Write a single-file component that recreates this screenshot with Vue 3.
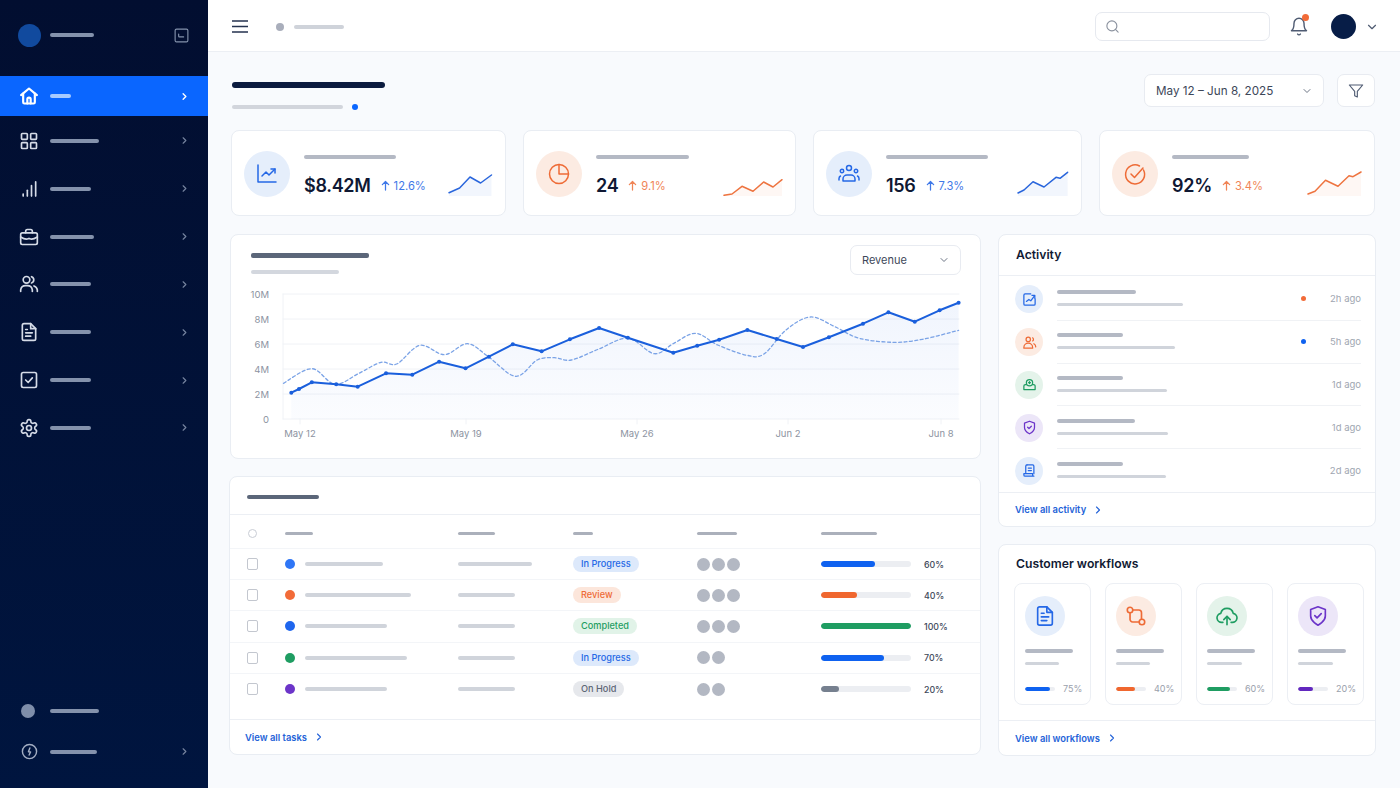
<template>
  <div class="app">
    <aside class="sidebar">
      <div class="brand">
        <span class="logo"></span>
        <span class="bar side-bar" style="width: 44px"></span>
        <svg class="collapse" viewBox="0 0 24 24"><path v-for="d in icons.panel" :key="d" :d="d" /></svg>
      </div>
      <nav>
        <a v-for="(item, i) in nav" :key="item.icon" class="nav-item" :class="{ active: i === 0 }">
          <svg class="nav-icon" viewBox="0 0 24 24"><path v-for="d in icons[item.icon]" :key="d" :d="d" /></svg>
          <span class="bar side-bar" :style="{ width: item.w + 'px' }"></span>
          <svg class="nav-chev" viewBox="0 0 24 24"><path :d="icons.right[0]" /></svg>
        </a>
      </nav>
      <div class="side-bottom">
        <a class="nav-item low">
          <span class="side-dot"></span>
          <span class="bar side-bar" style="width: 49px"></span>
        </a>
        <a class="nav-item low">
          <svg class="nav-icon" viewBox="0 0 24 24"><path v-for="d in icons.bolt" :key="d" :d="d" /></svg>
          <span class="bar side-bar" style="width: 47px"></span>
          <svg class="nav-chev" viewBox="0 0 24 24"><path :d="icons.right[0]" /></svg>
        </a>
      </div>
    </aside>

    <div class="page">
      <header class="topbar">
        <svg class="burger" viewBox="0 0 16 13"><path d="M0 1h16M0 6.5h16M0 12h16" /></svg>
        <span class="crumb-dot"></span>
        <span class="bar crumb" style="width: 50px"></span>
        <div class="search">
          <svg viewBox="0 0 24 24"><path v-for="d in icons.search" :key="d" :d="d" /></svg>
        </div>
        <div class="bell">
          <svg viewBox="0 0 24 24"><path v-for="d in icons.bell" :key="d" :d="d" /></svg>
          <span class="bell-dot"></span>
        </div>
        <span class="avatar"></span>
        <svg class="chev small" viewBox="0 0 24 24"><path :d="icons.down[0]" /></svg>
      </header>

      <main class="content">
        <div class="page-head">
          <div>
            <span class="bar title-bar"></span>
            <div class="sub-row">
              <span class="bar sub-bar"></span>
              <span class="sub-dot"></span>
            </div>
          </div>
          <div class="head-actions">
            <div class="select date">
              <span>May 12 – Jun 8, 2025</span>
              <svg class="chev" viewBox="0 0 24 24"><path :d="icons.down[0]" /></svg>
            </div>
            <div class="select filter">
              <svg viewBox="0 0 24 24"><path :d="icons.filter[0]" /></svg>
            </div>
          </div>
        </div>

        <section class="stats">
          <div v-for="s in stats" :key="s.value" class="card stat">
            <span class="stat-icon" :class="s.tone">
              <svg viewBox="0 0 24 24"><path v-for="d in icons[s.icon]" :key="d" :d="d" /></svg>
            </span>
            <div class="stat-body">
              <span class="bar stat-bar" :style="{ width: s.bar + 'px' }"></span>
              <div class="stat-line">
                <strong>{{ s.value }}</strong>
                <span class="delta" :class="s.tone">
                  <svg viewBox="0 0 10 12"><path d="M5 11V1.5M1.5 5 5 1.5 8.5 5" /></svg>
                  {{ s.delta }}
                </span>
              </div>
            </div>
            <svg class="spark" :class="s.tone" :width="sparkBox(s).w" height="26" :viewBox="sparkBox(s).view">
              <path class="spark-fill" :d="sparkArea(s.points)" />
              <path class="spark-line" :d="linePath(s.points)" />
            </svg>
          </div>
        </section>

        <section class="lower">
          <div class="col">
            <div class="card chart-card">
              <div class="chart-head">
                <div>
                  <span class="bar chart-title"></span>
                  <span class="bar chart-sub"></span>
                </div>
                <div class="select metric">
                  <span>Revenue</span>
                  <svg class="chev" viewBox="0 0 24 24"><path :d="icons.down[0]" /></svg>
                </div>
              </div>
              <svg class="chart" viewBox="231 284 749 165" width="749" height="165">
                <defs>
                  <linearGradient id="areaFill" x1="0" y1="0" x2="0" y2="1">
                    <stop offset="0" stop-color="#2f6fe8" stop-opacity="0.07" />
                    <stop offset="1" stop-color="#2f6fe8" stop-opacity="0.02" />
                  </linearGradient>
                </defs>
                <g v-for="(t, i) in yTicks" :key="t">
                  <line x1="283" x2="959" :y1="294 + i * 25" :y2="294 + i * 25" class="grid-line" />
                  <text x="269" :y="297.5 + i * 25" text-anchor="end" class="axis">{{ t }}</text>
                </g>
                <line x1="283" x2="283" y1="294" y2="419" class="grid-line" />
                <line v-for="x in xGuides" :key="x" :x1="x" :x2="x" y1="419" y2="424" class="grid-line" />
                <text v-for="l in xLabels" :key="l.t" :x="l.x" y="437" text-anchor="middle" class="axis">{{ l.t }}</text>
                <path :d="chartArea" fill="url(#areaFill)" />
                <path :d="smoothPath(compare)" class="compare" />
                <path :d="linePath(revenue)" class="revenue" />
                <circle v-for="p in revenue" :key="p[0]" :cx="p[0]" :cy="p[1]" r="2" class="point" />
              </svg>
            </div>

            <div class="card table-card">
              <div class="table-title"><span class="bar"></span></div>
              <div class="trow thead">
                <span class="head-check"></span>
                <span class="bar th" style="width: 28px"></span>
                <span class="bar th" style="width: 37px"></span>
                <span class="bar th" style="width: 20px"></span>
                <span class="bar th" style="width: 40px"></span>
                <span class="bar th" style="width: 56px"></span>
              </div>
              <div v-for="r in rows" :key="r.name + r.pct" class="trow">
                <span class="check"></span>
                <div class="name-cell">
                  <span class="row-dot" :style="{ background: r.dot }"></span>
                  <span class="bar td" :style="{ width: r.name + 'px' }"></span>
                </div>
                <span class="bar td" :style="{ width: r.owner + 'px' }"></span>
                <div class="badge-cell"><span class="badge" :class="r.tone">{{ r.status }}</span></div>
                <div class="people">
                  <span v-for="n in r.people" :key="n"></span>
                </div>
                <div class="progress-cell">
                  <div class="track">
                    <div class="fill" :class="r.tone" :style="{ width: r.pct + '%' }"></div>
                  </div>
                  <span class="pct">{{ r.pct }}%</span>
                </div>
              </div>
              <div class="card-foot">
                <a class="link">View all tasks</a>
                <svg viewBox="0 0 24 24"><path :d="icons.right[0]" /></svg>
              </div>
            </div>
          </div>

          <div class="col">
            <div class="card activity">
              <h3 class="card-head">Activity</h3>
              <div class="act-list">
                <div v-for="a in activity" :key="a.icon" class="act-row">
                  <span class="act-icon" :class="a.tone">
                    <svg viewBox="0 0 24 24"><path v-for="d in icons[a.icon]" :key="d" :d="d" /></svg>
                  </span>
                  <div class="act-body">
                    <div class="act-text">
                      <span class="bar act-top" :style="{ width: a.top + 'px' }"></span>
                      <span class="bar act-low" :style="{ width: a.low + 'px' }"></span>
                    </div>
                    <span v-if="a.dot" class="act-dot" :class="a.dot"></span>
                    <span class="act-time">{{ a.time }}</span>
                  </div>
                </div>
              </div>
              <div class="card-foot">
                <a class="link">View all activity</a>
                <svg viewBox="0 0 24 24"><path :d="icons.right[0]" /></svg>
              </div>
            </div>

            <div class="card workflows">
              <h3 class="wf-head">Customer workflows</h3>
              <div class="wf-grid">
                <div v-for="w in workflows" :key="w.icon" class="wf-card">
                  <span class="wf-icon" :class="w.tone">
                    <svg viewBox="0 0 24 24"><path v-for="d in icons[w.icon]" :key="d" :d="d" /></svg>
                  </span>
                  <span class="bar wf-top"></span>
                  <span class="bar wf-low" :style="{ width: w.low + 'px' }"></span>
                  <div class="wf-progress">
                    <div class="track">
                      <div class="fill" :class="w.tone" :style="{ width: w.fill + 'px' }"></div>
                    </div>
                    <span>{{ w.pct }}%</span>
                  </div>
                </div>
              </div>
              <div class="card-foot">
                <a class="link">View all workflows</a>
                <svg viewBox="0 0 24 24"><path :d="icons.right[0]" /></svg>
              </div>
            </div>
          </div>
        </section>
      </main>
    </div>
  </div>
</template>

<script setup>
import { computed } from "vue";

const ring = (x, y, r) => `M${x - r} ${y}a${r} ${r} 0 1 0 ${2 * r} 0a${r} ${r} 0 1 0 ${-2 * r} 0`;

const icons = {
  right: ["M9 6l6 6-6 6"],
  down: ["M6 9l6 6 6-6"],
  panel: ["M5 3h14a2 2 0 0 1 2 2v14a2 2 0 0 1-2 2H5a2 2 0 0 1-2-2V5a2 2 0 0 1 2-2z", "M8 10v3a1 1 0 0 0 1 1h6"],
  home: ["M2.5 11 12 3l9.5 8", "M5 9v10.5A1.5 1.5 0 0 0 6.5 21h11a1.5 1.5 0 0 0 1.5-1.5V9", "M10 21v-5a2 2 0 0 1 4 0v5"],
  grid: ["M4 3h5a1 1 0 0 1 1 1v5a1 1 0 0 1-1 1H4a1 1 0 0 1-1-1V4a1 1 0 0 1 1-1z", "M15 3h5a1 1 0 0 1 1 1v5a1 1 0 0 1-1 1h-5a1 1 0 0 1-1-1V4a1 1 0 0 1 1-1z", "M4 14h5a1 1 0 0 1 1 1v5a1 1 0 0 1-1 1H4a1 1 0 0 1-1-1v-5a1 1 0 0 1 1-1z", "M15 14h5a1 1 0 0 1 1 1v5a1 1 0 0 1-1 1h-5a1 1 0 0 1-1-1v-5a1 1 0 0 1 1-1z"],
  signal: ["M5 20.5V18", "M10 20.5v-7", "M15 20.5V8", "M20 20.5v-17"],
  case: ["M4 7h16a2 2 0 0 1 2 2v10a2 2 0 0 1-2 2H4a2 2 0 0 1-2-2V9a2 2 0 0 1 2-2z", "M8 7V5a2 2 0 0 1 2-2h4a2 2 0 0 1 2 2v2", "M2 12c5 3 7 3 9 2h2c2 1 4 1 9-2"],
  users: [ring(9, 7, 4), "M2 21v-2a6 6 0 0 1 6-5h2a6 6 0 0 1 6 5v2", "M15 3.2a4 4 0 0 1 0 7.6", "M18 14.3a6 6 0 0 1 4 4.7v2"],
  note: ["M14 2H6a2 2 0 0 0-2 2v16a2 2 0 0 0 2 2h12a2 2 0 0 0 2-2V8z", "M14 2v6h6", "M8 9h2", "M8 13h8", "M8 17h6"],
  task: ["M5 3h14a2 2 0 0 1 2 2v14a2 2 0 0 1-2 2H5a2 2 0 0 1-2-2V5a2 2 0 0 1 2-2z", "M8 12l3 3 5-5.5"],
  gear: ["M12.22 2h-.44a2 2 0 0 0-2 2v.18a2 2 0 0 1-1 1.73l-.43.25a2 2 0 0 1-2 0l-.15-.08a2 2 0 0 0-2.73.73l-.22.38a2 2 0 0 0 .73 2.73l.15.1a2 2 0 0 1 1 1.72v.51a2 2 0 0 1-1 1.74l-.15.09a2 2 0 0 0-.73 2.73l.22.38a2 2 0 0 0 2.73.73l.15-.08a2 2 0 0 1 2 0l.43.25a2 2 0 0 1 1 1.73V20a2 2 0 0 0 2 2h.44a2 2 0 0 0 2-2v-.18a2 2 0 0 1 1-1.73l.43-.25a2 2 0 0 1 2 0l.15.08a2 2 0 0 0 2.73-.73l.22-.39a2 2 0 0 0-.73-2.73l-.15-.08a2 2 0 0 1-1-1.74v-.5a2 2 0 0 1 1-1.74l.15-.09a2 2 0 0 0 .73-2.73l-.22-.38a2 2 0 0 0-2.73-.73l-.15.08a2 2 0 0 1-2 0l-.43-.25a2 2 0 0 1-1-1.73V4a2 2 0 0 0-2-2z", ring(12, 12, 3)],
  bolt: [ring(12, 12, 10), "M12.5 7l-2 5.5h3l-2 4.5"],
  search: [ring(11, 11, 8), "M21 21l-4.3-4.3"],
  bell: ["M6 8a6 6 0 0 1 12 0c0 7 3 9 3 9H3s3-2 3-9", "M10.3 21a1.94 1.94 0 0 0 3.4 0"],
  filter: ["M22 3H2l8 9.46V19l4 2v-8.54L22 3z"],
  trend: ["M3 3v17h18", "M7 14l4-4 3 3 6-6", "M16 7h4v4"],
  pie: [ring(12, 12, 9.5), "M12 2.5V12h9.5"],
  team: [ring(12, 6, 2.5), ring(5, 9, 1.7), ring(19, 9, 1.7), "M6 19v-2a4 4 0 0 1 4-4h4a4 4 0 0 1 4 4v2z", "M2 18v-1.5a3 3 0 0 1 1.5-2.5", "M22 18v-1.5a3 3 0 0 0-1.5-2.5"],
  goal: ["M20.5 8a9.5 9.5 0 1 1-4-4", "M8 12l3.5 3.5L20 6"],
  actChart: ["M21 11v8a2 2 0 0 1-2 2H5a2 2 0 0 1-2-2V5a2 2 0 0 1 2-2h9", "M7 15l4-3 3 2 6-8", "M16 5.5h4.5V10"],
  actUsers: [ring(10, 7, 3.5), "M3 21v-1a7 7 0 0 1 14 0v1z", "M17 4.5a3 3 0 0 1 0 5", "M19 14a6 6 0 0 1 3 5"],
  actUser: [ring(12, 9, 5), "M7 12H5.5A2.5 2.5 0 0 0 3 14.5V20h18v-5.5a2.5 2.5 0 0 0-2.5-2.5H17", "M12 7.5v3M10.5 9h3"],
  actShield: ["M12 22s8-4 8-10V5l-8-3-8 3v7c0 6 8 10 8 10", "M9 11.5l2.2 2.2L15 10"],
  actScroll: ["M8 3h9a2 2 0 0 1 2 2v12", "M8 3a2 2 0 0 0-2 2v10", "M3 17h14v2a2 2 0 0 0 2 2H5a2 2 0 0 1-2-2z", "M10 8h5", "M10 12h5"],
  doc: ["M14 2H6a2 2 0 0 0-2 2v16a2 2 0 0 0 2 2h12a2 2 0 0 0 2-2V8z", "M14 2v6h6", "M8 9h3", "M8 13h8", "M8 17h6"],
  flow: [ring(5.5, 5.5, 3), ring(18.5, 18.5, 3), "M8.5 5.5H15a3 3 0 0 1 3 3v7", "M5.5 8.5V15a3 3 0 0 0 3 3.5h7"],
  cloud: ["M7.5 19h-1a5 5 0 0 1-1.3-9.9 7 7 0 0 1 13.6 0A5 5 0 0 1 17.5 19h-1", "M12 21.5v-9", "M8.5 16l3.5-3.5 3.5 3.5"],
  shield: ["M12 22s8-4 8-10V5l-8-3-8 3v7c0 6 8 10 8 10", "M8.5 11.5l2.5 2.5 4.500-4.500"]
};

const nav = [
  { icon: "home", w: 21 },
  { icon: "grid", w: 49 },
  { icon: "signal", w: 41 },
  { icon: "case", w: 44 },
  { icon: "users", w: 41 },
  { icon: "note", w: 41 },
  { icon: "task", w: 41 },
  { icon: "gear", w: 41 }
];

const stats = [
  { value: "$8.42M", delta: "12.6%", icon: "trend", tone: "blue", bar: 92,
    points: [[450, 192.7], [460.6, 188], [471, 177], [481.6, 183], [492.5, 175]] },
  { value: "24", delta: "9.1%", icon: "pie", tone: "orange", bar: 93,
    points: [[724, 195.3], [732, 194], [742, 186.3], [753, 191.3], [763.6, 182], [773, 187], [782, 179.7]] },
  { value: "156", delta: "7.3%", icon: "team", tone: "blue", bar: 102,
    points: [[1018, 193], [1024, 190], [1033, 181.7], [1044, 187], [1056, 177.3], [1060, 178.3], [1067.6, 172.3]] },
  { value: "92%", delta: "3.4%", icon: "goal", tone: "orange", bar: 77,
    points: [[1309, 194], [1316, 191.3], [1326.5, 180.3], [1339, 186.3], [1350, 175.7], [1354, 176.7], [1362, 172]] }
];

const revenue = [
  [291.3, 392.7], [299, 389], [311.8, 382.3], [336.2, 384.3], [357.7, 386.7],
  [386, 373.3], [412.3, 374.7], [439.1, 361.7], [465.5, 368.3], [488.9, 356.7],
  [512.8, 344.3], [541.6, 351.3], [569.9, 339.3], [599.1, 328], [627.9, 337.7],
  [673.3, 352.7], [697.2, 345.7], [719.1, 339.7], [747.4, 330], [776.7, 339],
  [803, 347], [828.9, 337.3], [863, 323.7], [888.4, 312.3], [914.8, 321.7],
  [939.6, 310.3], [958.6, 302.7]
];

const compare = [
  [283.5, 383.3], [311.8, 368.7], [334.8, 384.3], [359, 373.3], [381, 362.3],
  [396.7, 364], [420, 345.3], [444.5, 354.7], [467.4, 343.7], [488.4, 356.7],
  [515.7, 376.3], [537.2, 360], [554.3, 357.7], [571.3, 360], [598.2, 349.3],
  [628, 338.3], [654.3, 353.7], [673.8, 343.3], [695.7, 333.3], [717.7, 345],
  [747, 355.3], [764, 354], [786, 330], [810.4, 317], [834.8, 326.7],
  [859.2, 338.3], [893.3, 342.3], [922.5, 339.3], [958.6, 330.3]
];

const yTicks = ["10M", "8M", "6M", "4M", "2M", "0"];
const xGuides = [300, 466, 637, 788, 941];
const xLabels = [
  { t: "May 12", x: 300 },
  { t: "May 19", x: 466 },
  { t: "May 26", x: 637 },
  { t: "Jun 2", x: 788 },
  { t: "Jun 8", x: 941 }
];

const rows = [
  { name: 78, owner: 74, dot: "#2f76f6", status: "In Progress", tone: "blue", people: 3, pct: 60 },
  { name: 106, owner: 57, dot: "#f26b38", status: "Review", tone: "orange", people: 3, pct: 40 },
  { name: 82, owner: 57, dot: "#1f66ee", status: "Completed", tone: "green", people: 3, pct: 100 },
  { name: 102, owner: 57, dot: "#1f9d62", status: "In Progress", tone: "blue", people: 2, pct: 70 },
  { name: 82, owner: 57, dot: "#6c35c9", status: "On Hold", tone: "gray", people: 2, pct: 20 }
];

const activity = [
  { icon: "actChart", tone: "blue", top: 79, low: 126, dot: "orange", time: "2h ago" },
  { icon: "actUsers", tone: "orange", top: 66, low: 118, dot: "blue", time: "5h ago" },
  { icon: "actUser", tone: "green", top: 66, low: 110, time: "1d ago" },
  { icon: "actShield", tone: "purple", top: 78, low: 111, time: "1d ago" },
  { icon: "actScroll", tone: "blue", top: 66, low: 109, time: "2d ago" }
];

const workflows = [
  { icon: "doc", tone: "blue", low: 34, pct: 75, fill: 25 },
  { icon: "flow", tone: "orange", low: 34, pct: 40, fill: 19 },
  { icon: "cloud", tone: "green", low: 35, pct: 60, fill: 23 },
  { icon: "shield", tone: "purple", low: 35, pct: 20, fill: 15 }
];

const linePath = (pts) => pts.map((p, i) => (i ? "L" : "M") + p[0] + " " + p[1]).join("");

// catmull-rom through the points, for the dashed comparison line
const smoothPath = (pts) => {
  let d = `M${pts[0][0]} ${pts[0][1]}`;
  for (let i = 0; i < pts.length - 1; i++) {
    const a = pts[i - 1] || pts[i];
    const b = pts[i];
    const c = pts[i + 1];
    const e = pts[i + 2] || c;
    const c1 = [b[0] + (c[0] - a[0]) / 6, b[1] + (c[1] - a[1]) / 6];
    const c2 = [c[0] - (e[0] - b[0]) / 6, c[1] - (e[1] - b[1]) / 6];
    d += `C${c1[0].toFixed(1)} ${c1[1].toFixed(1)} ${c2[0].toFixed(1)} ${c2[1].toFixed(1)} ${c[0]} ${c[1]}`;
  }
  return d;
};

const sparkBox = (s) => {
  const x0 = s.points[0][0] - 1;
  const w = Math.ceil(s.points[s.points.length - 1][0] - x0 + 1);
  return { w, view: `${x0} 170 ${w} 26` };
};

const sparkArea = (pts) => `${linePath(pts)}V196H${pts[0][0]}Z`;

const chartArea = computed(() => `${linePath(revenue)}V419H${revenue[0][0]}Z`);
</script>

<style>
html,
body {
  margin: 0;
  background: #f8fafd;
}
</style>

<style scoped>
.app {
  display: flex;
  height: 788px;
  overflow: hidden;
  font-family: Inter, "Liberation Sans", sans-serif;
  color: #111a33;
}

svg {
  display: block;
  flex: none;
  fill: none;
  stroke: currentColor;
  stroke-width: 2;
  stroke-linecap: round;
  stroke-linejoin: round;
}

.bar {
  display: block;
  flex: none;
  height: 4px;
  border-radius: 2px;
  background: #b4b9c4;
}

/* sidebar */
.sidebar {
  width: 208px;
  flex: none;
  display: flex;
  flex-direction: column;
  background: linear-gradient(180deg, #020e30 0%, #00153f 100%);
}

.brand {
  height: 76px;
  display: flex;
  align-items: center;
  padding: 0 18px 6px 18px;
  box-sizing: border-box;
}

.logo {
  width: 23px;
  height: 23px;
  border-radius: 50%;
  background: #114a9e;
  margin-right: 9px;
}

.side-bar {
  background: #8492ac;
}

.collapse {
  width: 17px;
  height: 17px;
  margin-left: auto;
  color: #8492ac;
  stroke-width: 1.6;
}

.nav-item {
  height: 47.85px;
  display: flex;
  align-items: center;
  padding-left: 19px;
  padding-right: 18px;
  color: #d5dbe7;
}

.nav-item.active {
  height: 40px;
  margin-bottom: 1px;
  background: #0a66ff;
  color: #fff;
}

.nav-item.active .nav-icon {
  stroke-width: 2.6;
}

.nav-item.active .side-bar {
  background: #a8cbff;
}

.nav-item.active .nav-chev {
  color: #fff;
  stroke-width: 3;
}

.nav-icon {
  width: 20px;
  height: 20px;
  margin-right: 11px;
}

.nav-chev {
  width: 11px;
  height: 11px;
  margin-left: auto;
  color: #76849f;
  stroke-width: 2.5;
}

.side-bottom {
  margin-top: auto;
  padding-bottom: 16px;
}

.nav-item.low {
  height: 41px;
  padding-left: 21px;
}

.nav-item.low .nav-icon {
  width: 17px;
  height: 17px;
  color: #a3aec3;
  margin-right: 12px;
}

.side-dot {
  width: 14px;
  height: 14px;
  border-radius: 50%;
  background: #7f8eaa;
  margin-right: 15px;
}

/* topbar */
.page {
  flex: 1;
  min-width: 0;
  display: flex;
  flex-direction: column;
}

.topbar {
  height: 52px;
  flex: none;
  box-sizing: border-box;
  display: flex;
  align-items: center;
  padding: 2px 21px 0 24px;
  background: #fff;
  border-bottom: 1px solid #eceff4;
}

.burger {
  width: 16px;
  height: 13px;
  color: #25324f;
  margin-right: 28px;
  stroke-width: 1.6;
}

.crumb-dot {
  width: 8px;
  height: 8px;
  border-radius: 50%;
  background: #a9aebb;
  margin-right: 10px;
}

.crumb {
  background: #cfd3da;
}

.search {
  width: 175px;
  height: 29px;
  box-sizing: border-box;
  margin-left: auto;
  border: 1px solid #e6e9ef;
  border-radius: 7px;
  display: flex;
  align-items: center;
  padding-left: 9px;
  color: #8a919e;
}

.search svg {
  width: 15px;
  height: 15px;
  stroke-width: 1.8;
}

.bell {
  position: relative;
  margin-left: 19px;
  color: #4f5b72;
}

.bell svg {
  width: 20px;
  height: 21px;
  stroke-width: 1.7;
}

.bell-dot {
  position: absolute;
  top: -2px;
  right: 0;
  width: 7px;
  height: 7px;
  border-radius: 50%;
  background: #f26b38;
}

.avatar {
  width: 25px;
  height: 25px;
  border-radius: 50%;
  background: #071d47;
  margin-left: 22px;
}

.chev {
  width: 12px;
  height: 12px;
  color: #6d7585;
  stroke-width: 2;
}

.chev.small {
  width: 14px;
  height: 14px;
  margin-left: 9px;
  color: #4f5b72;
}

/* page */
.content {
  flex: 1;
  padding: 22px 24px 0 21px;
}

.page-head {
  display: flex;
  justify-content: space-between;
  margin: 0 1px 0 3px;
  height: 33px;
}

.title-bar {
  width: 153px;
  height: 6px;
  margin-top: 8px;
  border-radius: 3px;
  background: #0b1b3f;
}

.sub-row {
  display: flex;
  align-items: center;
  margin-top: 16px;
}

.sub-bar {
  width: 111px;
  background: #d2d5dc;
}

.sub-dot {
  width: 6px;
  height: 6px;
  margin-left: 9px;
  border-radius: 50%;
  background: #0a66ff;
}

.head-actions {
  display: flex;
  gap: 13px;
}

.select {
  box-sizing: border-box;
  display: flex;
  align-items: center;
  background: #fff;
  border: 1px solid #e8ebf1;
  border-radius: 7px;
  font-size: 11.7px;
  color: #3d4759;
}

.date {
  width: 180px;
  height: 33px;
  padding: 0 10px 0 11px;
  justify-content: space-between;
}

.filter {
  width: 38px;
  height: 33px;
  justify-content: center;
  color: #4f5b72;
}

.filter svg {
  width: 16px;
  height: 16px;
  stroke-width: 1.7;
}

.card {
  box-sizing: border-box;
  background: #fff;
  border: 1px solid #e9edf3;
  border-radius: 8px;
}

/* stats */
.stats {
  display: grid;
  grid-template-columns: 275px 273px 269px 276px;
  gap: 17px;
  margin: 23px 0 18px 2px;
}

.stat {
  height: 86px;
  display: flex;
  align-items: flex-start;
  padding: 20px 12px 0 12px;
}

.stat-icon {
  width: 46px;
  height: 46px;
  flex: none;
  border-radius: 50%;
  display: flex;
  align-items: center;
  justify-content: center;
  margin-right: 14px;
}

.stat-icon svg {
  width: 24px;
  height: 24px;
  stroke-width: 1.5;
}

.stat-body {
  padding-top: 4px;
}

.stat-line {
  display: flex;
  align-items: center;
  margin-top: 14px;
  height: 24px;
}

.stat-line strong {
  font-size: 18px;
  font-weight: 600;
  letter-spacing: -0.3px;
  color: #0f1833;
  margin-right: 10px;
}

.delta {
  display: flex;
  align-items: center;
  gap: 4px;
  font-size: 11.2px;
  margin-top: 1px;
}

.delta svg {
  width: 9px;
  height: 11px;
  stroke-width: 1.4;
}

.delta.blue {
  color: #3f78e8;
}

.delta.orange {
  color: #f08456;
}

.spark {
  margin-left: auto;
  margin-top: 19px;
  stroke-width: 1.5;
}

.spark-fill {
  stroke: none;
  fill: currentColor;
  opacity: 0.06;
}

.spark.blue {
  color: #2a66dc;
}

.spark.orange {
  color: #ee7440;
}

/* tone colours */
.stat-icon.blue,
.act-icon.blue,
.wf-icon.blue {
  background: #e5eefb;
  color: #2568e6;
}

.stat-icon.orange,
.act-icon.orange,
.wf-icon.orange {
  background: #fcebe2;
  color: #ee6b36;
}

.act-icon.green,
.wf-icon.green {
  background: #e4f3ea;
  color: #1f9d62;
}

.act-icon.purple,
.wf-icon.purple {
  background: #ece6f8;
  color: #6c35c9;
}

/* lower */
.lower {
  display: grid;
  grid-template-columns: 752px 378px;
  gap: 17px;
}

.col {
  display: flex;
  flex-direction: column;
  gap: 17px;
}

.chart-card {
  height: 225px;
  margin-left: 1px;
}

.chart-head {
  height: 49px;
  display: flex;
  justify-content: space-between;
  padding: 10px 19px 0 20px;
  box-sizing: border-box;
}

.chart-title {
  width: 118px;
  height: 5px;
  margin-top: 8px;
  background: #5b6679;
}

.chart-sub {
  width: 88px;
  margin-top: 12px;
  background: #d3d7de;
}

.metric {
  width: 111px;
  height: 30px;
  padding: 0 10px 0 11px;
  justify-content: space-between;
  font-size: 11px;
}

.chart {
  stroke: none;
}

.grid-line {
  stroke: #f0f2f6;
  stroke-width: 1;
}

.axis {
  font-size: 9.5px;
  fill: #8c93a1;
  stroke: none;
}

.revenue {
  stroke: #1a5fdc;
  stroke-width: 2;
}

.compare {
  stroke: #7ba3e6;
  stroke-width: 1.3;
  stroke-dasharray: 3 2.5;
}

.point {
  fill: #1a5fdc;
}

/* table */
.table-card {
  height: 279px;
  display: flex;
  flex-direction: column;
}

.table-title {
  height: 38px;
  flex: none;
  box-sizing: border-box;
  padding: 18px 0 0 17px;
  border-bottom: 1px solid #eceff4;
}

.table-title .bar {
  width: 72px;
  background: #5b6679;
}

.trow {
  display: grid;
  grid-template-columns: 38px 173px 115px 124px 124px 1fr;
  align-items: center;
  flex: none;
  height: 31.2px;
  padding-left: 17px;
  box-sizing: border-box;
  border-bottom: 1px solid #f3f5f8;
}

.trow:nth-last-child(2) {
  border-bottom: none;
}

.thead {
  height: 34px;
  padding-top: 3px;
}

.head-check {
  width: 7px;
  height: 7px;
  margin-left: 1px;
  border: 1px solid #c9cdd5;
  border-radius: 50%;
}

.th {
  height: 3px;
  background: #abb0bb;
}

.td {
  height: 4px;
  background: #d0d4db;
}

.check {
  width: 9px;
  height: 10px;
  border: 1px solid #c3c7cf;
  border-radius: 2px;
}

.name-cell,
.badge-cell {
  display: flex;
  align-items: center;
}

.row-dot {
  width: 10px;
  height: 10px;
  border-radius: 50%;
  margin-right: 10px;
}

.badge {
  height: 16px;
  line-height: 16px;
  padding: 0 8px;
  border-radius: 8px;
  font-size: 9.2px;
  font-weight: 500;
}

.badge.blue {
  background: #dde9fb;
  color: #2568e6;
}

.badge.orange {
  background: #fce6db;
  color: #ee6b36;
}

.badge.green {
  background: #e1f3e8;
  color: #1f9d62;
}

.badge.gray {
  background: #e6e8ec;
  color: #5d6675;
}

.people {
  display: flex;
  gap: 2px;
}

.people span {
  width: 13px;
  height: 13px;
  border-radius: 50%;
  background: #b3b8c3;
}

.progress-cell {
  display: flex;
  align-items: center;
}

.track {
  width: 90px;
  height: 6px;
  border-radius: 3px;
  background: #eceef2;
  overflow: hidden;
}

.fill {
  height: 100%;
  border-radius: 3px;
}

.fill.blue {
  background: #0f62f0;
}

.fill.orange {
  background: #f0672f;
}

.fill.green {
  background: #1f9d62;
}

.fill.gray {
  background: #76808f;
}

.fill.purple {
  background: #6228bf;
}

.pct {
  margin-left: 13px;
  font-size: 8.8px;
  font-weight: 500;
  color: #3d4759;
}

.card-foot {
  margin-top: auto;
  height: 35px;
  flex: none;
  box-sizing: border-box;
  display: flex;
  align-items: center;
  padding-left: 15px;
  border-top: 1px solid #eceff4;
  color: #2463d8;
}

.card-foot svg {
  width: 12px;
  height: 12px;
  margin-left: 6px;
  stroke-width: 2.2;
}

.link {
  font-size: 9.4px;
  font-weight: 600;
  color: #2463d8;
}

/* activity */
.activity {
  height: 293px;
  display: flex;
  flex-direction: column;
}

.activity .card-foot {
  height: 34px;
  padding-left: 16px;
}

.card-head {
  margin: 0;
  height: 41px;
  flex: none;
  box-sizing: border-box;
  padding: 0 0 1px 17px;
  display: flex;
  align-items: center;
  font-size: 12.2px;
  font-weight: 600;
  border-bottom: 1px solid #eceff4;
}

.act-list {
  flex: 1;
  display: flex;
  flex-direction: column;
  padding-top: 2px;
}

.act-row {
  flex: 1;
  display: flex;
  align-items: center;
  padding: 0 14px 0 16px;
}

.act-icon {
  width: 28px;
  height: 28px;
  flex: none;
  border-radius: 50%;
  display: flex;
  align-items: center;
  justify-content: center;
  margin-right: 14px;
}

.act-icon svg {
  width: 15px;
  height: 15px;
  stroke-width: 2;
}

.act-body {
  flex: 1;
  align-self: stretch;
  display: flex;
  align-items: center;
  border-bottom: 1px solid #f0f2f5;
}

.act-row:last-child .act-body {
  border-bottom: none;
}

.act-text {
  flex: 1;
  display: flex;
  flex-direction: column;
  gap: 9px;
  padding-bottom: 1px;
}

.act-top {
  background: #b4b9c4;
}

.act-low {
  height: 3px;
  background: #d0d4db;
}

.act-dot {
  width: 5px;
  height: 5px;
  border-radius: 50%;
}

.act-dot.orange {
  background: #f26b38;
}

.act-dot.blue {
  background: #0f62f0;
}

.act-time {
  width: 55px;
  text-align: right;
  font-size: 9.5px;
  color: #a0a6b1;
}

/* workflows */
.workflows {
  height: 212px;
  display: flex;
  flex-direction: column;
}

.wf-head {
  margin: 0;
  height: 37px;
  flex: none;
  padding: 0 0 1px 17px;
  display: flex;
  align-items: center;
  font-size: 12.2px;
  font-weight: 600;
}

.wf-grid {
  display: grid;
  grid-template-columns: repeat(4, 77px);
  gap: 14px;
  padding-left: 15px;
}

.wf-card {
  height: 122px;
  box-sizing: border-box;
  padding: 12px 0 0 10px;
  border: 1px solid #eceff4;
  border-radius: 8px;
}

.wf-icon {
  width: 40px;
  height: 40px;
  border-radius: 50%;
  display: flex;
  align-items: center;
  justify-content: center;
}

.wf-icon svg {
  width: 22px;
  height: 22px;
  stroke-width: 1.8;
}

.wf-top {
  width: 48px;
  margin-top: 13px;
}

.wf-low {
  height: 3px;
  margin-top: 9px;
  background: #d0d4db;
}

.wf-progress {
  display: flex;
  align-items: center;
  gap: 8px;
  margin-top: 18px;
  font-size: 9px;
  color: #9aa0ac;
}

.wf-progress .track {
  width: 30px;
  height: 4px;
  flex: none;
}

.workflows .card-foot {
  padding-left: 16px;
}
</style>
